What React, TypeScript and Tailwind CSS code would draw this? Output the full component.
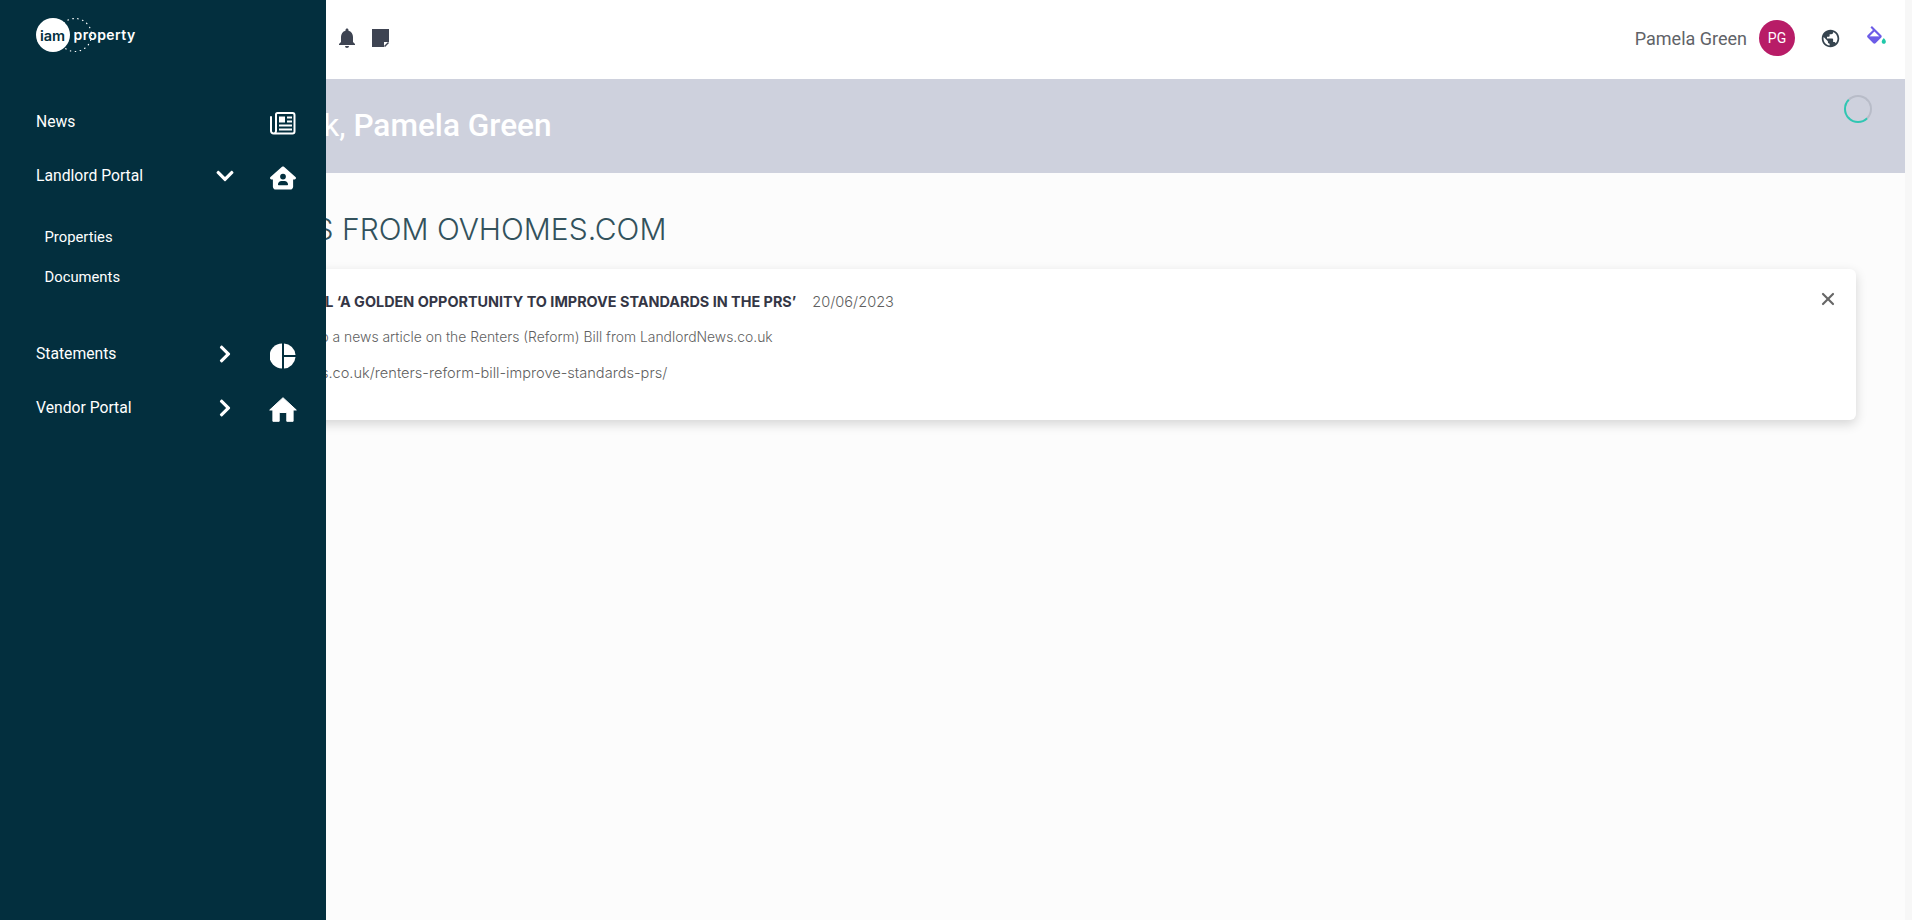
import { FaChevronDown, FaChevronRight } from "react-icons/fa";
import { FaHouseUser } from "react-icons/fa6";
import { MdNotifications, MdPublic } from "react-icons/md";
import { X } from "lucide-react";

function NewsIcon() {
  return (
    <svg width="26" height="23" viewBox="0 0 26 23" fill="none" stroke="#fff" strokeWidth="2">
      <path d="M6 2.5c0-.8.7-1.5 1.5-1.5h15c1.100 0 2 .9 2 2v16.500c0 1.100-.9 2-2 2H3.500A2.500 2.500 0 0 1 1 19V5" strokeLinecap="round" />
      <path d="M6 2v17c0 1.200-.6 2-1.500 2.500" />
      <rect x="9" y="4.500" width="6" height="6" fill="#fff" stroke="none" />
      <path d="M17 5.500h5M17 9.500h5M9 13.500h13M9 17.500h13" strokeWidth="1.800" />
    </svg>
  );
}

function PieIcon() {
  return (
    <svg width="26" height="26" viewBox="0 0 26 26" fill="#fff">
      <path d="M12 .5v25A12.500 12.500 0 0 1 12 .5z" />
      <path d="M14 .5A12.500 12.500 0 0 1 25.500 12H14z" />
      <path d="M14 14h11.500A12.500 12.500 0 0 1 14 25.500z" />
    </svg>
  );
}

function HomeIcon() {
  return (
    <svg width="28" height="25" viewBox="0 0 28 25" fill="#fff">
      <path stroke="#fff" strokeWidth="1" strokeLinejoin="round" d="M14 .7 27.300 13h-3.200v11.300h-6.300V15.500h-7.600v8.800H3.900V13H.7z" />
    </svg>
  );
}

function NavRow({ label, chevron, icon }: { label: string; chevron?: "down" | "right"; icon: React.ReactNode }) {
  return (
    <div className="flex h-[54px] items-center pl-[36px] text-[15.7px] text-white">
      <span className="flex-1">{label}</span>
      <span className="flex w-[24px] justify-center text-[20px]">
        {chevron === "down" && <FaChevronDown />}
        {chevron === "right" && <FaChevronRight />}
      </span>
      <span className="mt-[3px] mr-[29px] ml-[32px] flex w-[28px] justify-center text-[26px]">{icon}</span>
    </div>
  );
}

function Logo() {
  return (
    <svg width="104" height="36" viewBox="0 0 104 36" className="block">
      <circle cx="17" cy="17" r="17" fill="#fff" />
      <circle cx="39" cy="17" r="16.500" fill="none" stroke="#fff" strokeWidth="1.200" strokeLinecap="round" strokeDasharray="0.5 4.500" />
      <text x="4" y="22.500" fontFamily="Inter, sans-serif" fontSize="14.500" fontWeight="600" fill="#032f3e">iam</text>
      <text x="37.500" y="21.500" fontFamily="Inter, sans-serif" fontSize="14" fontWeight="600" letterSpacing="0.400" fill="#fff">property</text>
    </svg>
  );
}

export default function App() {
  return (
    <div className="relative h-[920px] w-[1912px] overflow-hidden bg-[#fcfcfc] font-['Roboto',sans-serif]">
      <div className="h-full w-[1905px]">
        <header className="flex h-[79px] items-center bg-white pr-[16px] pb-[3px] pl-[335px]">
          <MdNotifications className="text-[24px] text-[#3e4452]" />
          <svg className="ml-[13px]" width="17" height="18" viewBox="0 0 17 18">
            <path fill="#3e4452" d="M0 0h17v18H0z" />
            <path fill="#fff" d="M12 13h5v5h-5z" />
            <path stroke="#3e4452" strokeWidth="1.500" d="M12.500 17.500l4-4" />
          </svg>
          <span className="ml-auto text-[18px] text-[#5f6368]">Pamela Green</span>
          <span className="ml-[12px] flex h-[36px] w-[36px] items-center justify-center rounded-full bg-[#b81c67] text-[14px] text-white">PG</span>
          <MdPublic className="ml-[25px] text-[21px] text-[#36444f]" />
          <svg className="ml-[23px]" width="25" height="25" viewBox="0 0 24 24">
            <path fill="#6c5ce7" d="M16.560 8.940 7.620 0 6.210 1.410l2.380 2.380-5.150 5.150a1.500 1.500 0 0 0 0 2.120l5.500 5.500c.29.29.68.44 1.060.44s.77-.15 1.060-.44l5.500-5.500c.59-.58.59-1.530 0-2.120zM5.210 10 10 5.210 14.790 10H5.210z" />
            <path fill="#6c5ce7" d="M4.500 10.300h11.200l-5.600 5.600z" />
            <path fill="#1fc8a9" d="M19 11.500s-2 2.170-2 3.500c0 1.100.9 2 2 2s2-.9 2-2c0-1.330-2-3.500-2-3.500z" />
          </svg>
        </header>
        <section className="flex h-[94px] items-center justify-between bg-[#ced1dd] pr-[33px] pl-[133px]">
          <h1 className="text-[31.6px] font-normal text-white">
            Welcome back, <span className="font-medium">Pamela Green</span>
          </h1>
          <span className="mb-[34px] h-[28px] w-[28px] rounded-full border-2 border-t-[#b8bcc8] border-r-[#b8bcc8] border-b-[#2fc6b2] border-l-[#2fc6b2]" />
        </section>
        <main className="pr-[49px] pl-[127px]">
          <h2 className="pt-[38px] font-['Inter',sans-serif] text-[30px] leading-[36px] font-light text-[#33525c]">
            LATEST NEWS FROM OVHOMES.COM
          </h2>
          <article className="relative mt-[22px] h-[151px] rounded-[6px] bg-white pt-[22px] pr-[24px] pl-[37px] font-['Inter',sans-serif] text-[13.9px] font-light text-[#5f5f5f] shadow-[0_4px_12px_rgba(0,0,0,0.16)]">
            <div className="-ml-[5px] flex items-baseline gap-[16px]">
              <strong className="text-[14.4px] font-bold text-[#343645]">RENTERS (REFORM) BILL ‘A GOLDEN OPPORTUNITY TO IMPROVE STANDARDS IN THE PRS’</strong>
              <span className="text-[14.6px]">20/06/2023</span>
            </div>
            <p className="mt-[13px] -ml-[2px]">Please see below a link to a news article on the Renters (Reform) Bill from LandlordNews.co.uk</p>
            <p className="mt-[15px] ml-[26px] text-[14.6px] leading-[20px]">https://landlordnews.co.uk/renters-reform-bill-improve-standards-prs/</p>
            <X className="absolute top-[20px] right-[18px] text-[#666]" size={20} strokeWidth={2.6} />
          </article>
        </main>
      </div>
      <div className="absolute inset-y-0 right-0 w-[7px] bg-[#f7f7f7]" />
      <aside className="absolute inset-y-0 left-0 w-[326px] bg-[#032f3e]">
        <div className="pt-[18px] pl-[36px]"><Logo /></div>
        <nav className="mt-[41px]">
          <NavRow label="News" icon={<NewsIcon />} />
          <NavRow label="Landlord Portal" chevron="down" icon={<FaHouseUser />} />
          <div className="pt-[14.5px] pb-[29.5px] pl-[44.500px] text-[14.800px] text-white">
            <div className="flex h-[40px] items-center">Properties</div>
            <div className="flex h-[40px] items-center">Documents</div>
          </div>
          <NavRow label="Statements" chevron="right" icon={<PieIcon />} />
          <NavRow label="Vendor Portal" chevron="right" icon={<HomeIcon />} />
        </nav>
      </aside>
    </div>
  );
}
